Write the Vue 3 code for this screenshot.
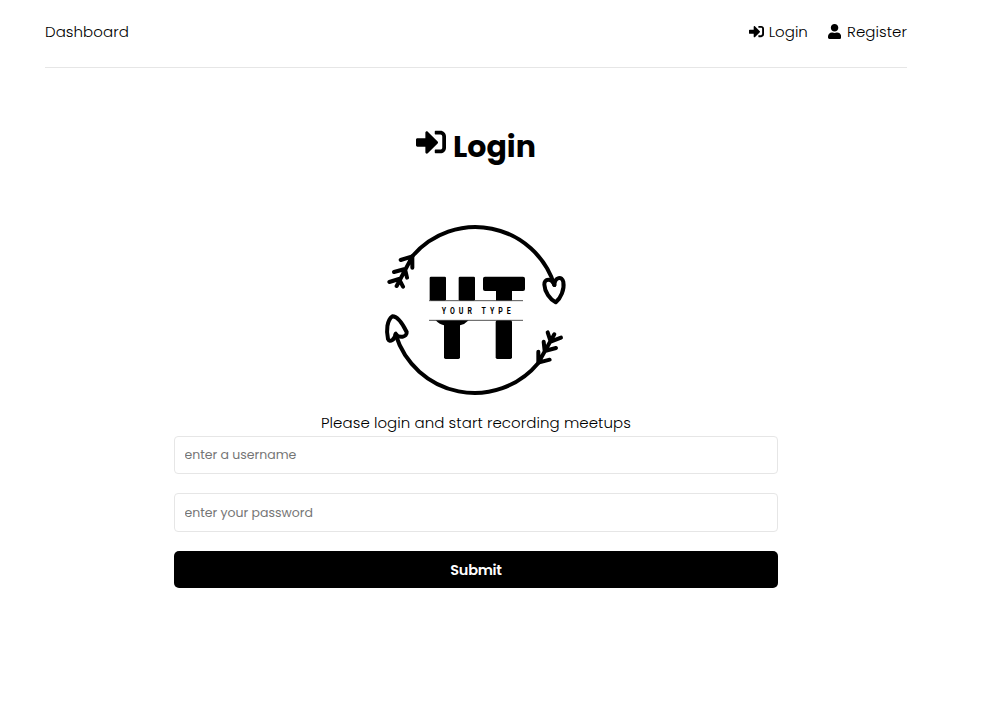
<script setup>
import { ref } from 'vue'

const username = ref('')
const password = ref('')
</script>

<template>
  <div class="container">
    <header class="header">
      <a class="link dash">Dashboard</a>
      <nav class="nav">
        <a class="link">
          <svg class="icon" viewBox="0 0 512 512"><path d="M416 448h-84c-6.6 0-12-5.4-12-12v-40c0-6.6 5.4-12 12-12h84c17.7 0 32-14.3 32-32V160c0-17.7-14.3-32-32-32h-84c-6.6 0-12-5.4-12-12V76c0-6.6 5.4-12 12-12h84c53 0 96 43 96 96v192c0 53-43 96-96 96zm-47-201L201 79c-15-15-41-4.5-41 17v96H24c-13.3 0-24 10.7-24 24v96c0 13.3 10.7 24 24 24h136v96c0 21.5 26 32 41 17l168-168c9.3-9.4 9.3-24.6 0-34z" /></svg>
          <span>Login</span>
        </a>
        <a class="link register">
          <svg class="icon" viewBox="0 0 448 512"><path d="M224 256c70.7 0 128-57.3 128-128S294.7 0 224 0 96 57.3 96 128s57.3 128 128 128zm89.6 32h-16.7c-22.2 10.2-46.9 16-72.9 16s-50.6-5.8-72.9-16h-16.7C60.2 288 0 348.2 0 422.4V464c0 26.5 21.5 48 48 48h352c26.5 0 48-21.5 48-48v-41.6c0-74.2-60.2-134.4-134.4-134.4z" /></svg>
          <span>Register</span>
        </a>
      </nav>
    </header>

    <section class="heading">
      <h1 class="title">
        <svg class="title-icon" viewBox="0 0 512 512"><path d="M416 448h-84c-6.6 0-12-5.4-12-12v-40c0-6.6 5.4-12 12-12h84c17.7 0 32-14.3 32-32V160c0-17.7-14.3-32-32-32h-84c-6.6 0-12-5.4-12-12V76c0-6.6 5.4-12 12-12h84c53 0 96 43 96 96v192c0 53-43 96-96 96zm-47-201L201 79c-15-15-41-4.5-41 17v96H24c-13.3 0-24 10.7-24 24v96c0 13.3 10.7 24 24 24h136v96c0 21.5 26 32 41 17l168-168c9.3-9.4 9.3-24.6 0-34z" /></svg>
        <span>Login</span>
      </h1>
      <svg class="logo" viewBox="0 0 600 570">
        <g class="stroke">
          <path d="M112 124A248 248 0 0 1 538 210" />
          <path d="M62 359A248 248 0 0 0 490 444" />
          <path d="M538 210C530 188 507 190 508 209C509 231 525 253 542 262C557 250 569 223 565 201C561 182 540 186 538 210" />
          <path d="M62 356C60 374 44 384 39 372C33 347 36 315 52 304C70 303 87 335 95 351C97 367 71 371 62 356" />
          <path d="M112 124L65 213M77 135L112 124V158M57 171L90 162L96 188M43 201L72 192L84 215" />
          <path d="M490 443L538 358M490 410V443L524 434M506 380L509 408L543 399M518 352L527 380L558 368" />
        </g>
        <rect x="164" y="185" width="49" height="72" rx="4" />
        <rect x="251" y="185" width="49" height="72" rx="4" />
        <rect x="324" y="185" width="126" height="43" rx="6" />
        <rect x="363" y="220" width="48" height="37" />
        <path d="M182 316H281Q270 328 255 331H207Q192 328 182 316Z" />
        <rect x="207" y="318" width="48" height="114" rx="5" />
        <rect x="362" y="316" width="49" height="116" rx="5" />
        <path class="rule" d="M162 257H444M162 316H444" />
        <text class="tagline" transform="translate(200 296) scale(.78 1)" textLength="266">YOUR TYPE</text>
      </svg>
      <p class="intro">Please login and start recording meetups</p>
    </section>

    <form class="form" @submit.prevent>
      <input v-model="username" class="field" type="text" placeholder="enter a username">
      <input v-model="password" class="field second" type="password" placeholder="enter your password">
      <button class="submit" type="submit">Submit</button>
    </form>
  </div>
</template>

<style>
body {
  background: #fff;
}
</style>

<style scoped>
* {
  box-sizing: border-box;
  margin: 0;
}
.container {
  width: 862px;
  margin-left: 45px;
  font-family: Poppins, Inter, sans-serif;
  font-weight: 300;
  font-size: 15px;
  color: #000;
}
.header {
  display: flex;
  justify-content: space-between;
  height: 68px;
  padding-top: 19px;
  border-bottom: 1px solid #e6e6e6;
}
.nav {
  display: flex;
  gap: 20px;
}
.link {
  display: flex;
  align-items: center;
  gap: 5px;
  height: 24px;
  letter-spacing: 0.06px;
  white-space: nowrap;
}
.register {
  gap: 6px;
}
.icon {
  height: 15px;
}
.heading {
  display: flex;
  flex-direction: column;
  align-items: center;
}
.title {
  display: flex;
  gap: 7px;
  height: 50px;
  margin-top: 54px;
  line-height: 50px;
  font-size: 30px;
  font-weight: 700;
}
.title-icon {
  width: 30px;
  height: 30px;
  margin-top: 5px;
}
.logo {
  width: 200px;
  height: 190px;
  margin-top: 43px;
  margin-right: 2px;
}
.stroke {
  fill: none;
  stroke: #000;
  stroke-width: 12;
  stroke-linecap: round;
  stroke-linejoin: round;
}
.rule {
  stroke: #333;
  stroke-width: 2.5;
}
.tagline {
  font: 700 27px Roboto, sans-serif;
}
.intro {
  height: 24px;
  margin-top: 6px;
  line-height: 24px;
  letter-spacing: 0.06px;
  white-space: nowrap;
}
.form {
  display: flex;
  flex-direction: column;
  width: 604px;
  margin: 1px auto 0;
}
.field {
  height: 38px;
  margin-bottom: 19px;
  padding: 0 9.5px;
  border: 1px solid #e6e6e6;
  border-radius: 4px;
  outline: none;
  font: 400 12.5px Poppins, Inter, sans-serif;
}
.second {
  height: 39px;
}
.field::placeholder {
  color: #757575;
}
.submit {
  height: 37px;
  padding: 1px 0 0;
  border: 0;
  border-radius: 5px;
  background: #000;
  color: #fff;
  font: 600 14.5px Poppins, Inter, sans-serif;
  letter-spacing: -0.3px;
}
</style>
